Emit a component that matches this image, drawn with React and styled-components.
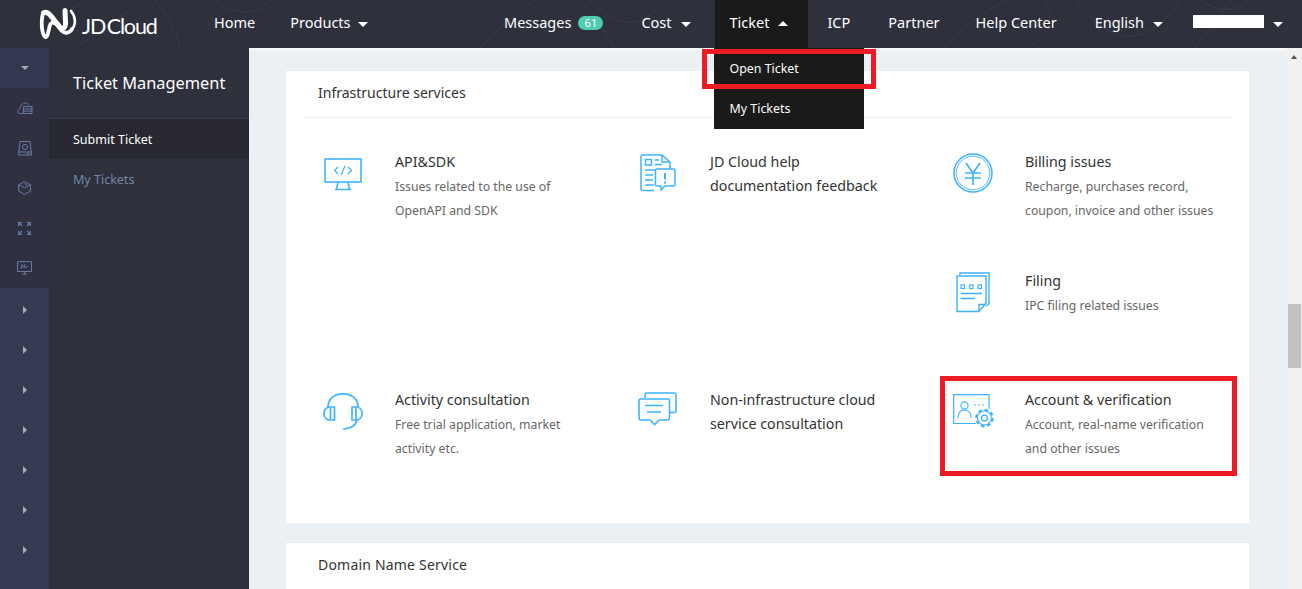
import React from "react";
import styled, { createGlobalStyle } from "styled-components";

const Global = createGlobalStyle`
  html, body { margin: 0; padding: 0; height: 100%; overflow: hidden; }
  body { font-family: "Noto Sans", "Open Sans", Arial, sans-serif; background: #fff; }
  #root { height: 100%; }
  * { box-sizing: border-box; }
`;

const Page = styled.div`
  width: 1302px; height: 589px; display: flex; flex-direction: column; overflow: hidden;
`;
const Header = styled.header`
  position: relative; height: 48px; flex: none; display: flex; align-items: stretch;
  background: #2e303c; color: #fff; overflow: visible;
`;
const HeaderLines = styled.svg`
  position: absolute; left: 0; top: 0; width: 1302px; height: 48px; pointer-events: none;
`;
const LogoLink = styled.a`
  position: relative; display: flex; align-items: center; width: 199px; padding-left: 39px; gap: 5px; flex: none;
`;
const LogoText = styled.span`
  font-family: Lato, sans-serif; font-weight: 400; font-size: 21.5px; letter-spacing: -1.1px; line-height: 48px; margin-top: 3px; white-space: nowrap;
  word-spacing: -3px;
`;
const Nav = styled.nav`
  position: relative; display: flex; align-items: stretch; width: ${p => p.$w}px; flex: none;
`;
const NavItem = styled.div`
  position: relative; display: flex; align-items: center; height: 48px; font-size: 14.5px; white-space: nowrap;
  margin-left: ${p => p.$ml || 0}px;
  padding: 0 ${p => p.$pr || 0}px 5px ${p => p.$pl || 0}px;
  background: ${p => (p.$active ? "#1a1a1a" : "transparent")};
`;
const Caret = styled.i`
  display: inline-block; width: 0; height: 0; margin-left: ${p => p.$gap || 9}px; margin-top: 6px;
  border-left: 5.5px solid transparent; border-right: 5.5px solid transparent;
  ${p => p.$up ? "border-bottom: 5px solid #fff; margin-top: 3px;" : "border-top: 5px solid #fff;"}
`;
const Badge = styled.span`
  display: inline-block; width: 25px; height: 14px; margin-left: 7px; margin-top: 3px; border-radius: 7px; background: #4fcdb0;
  color: #fff; font-size: 11px; line-height: 14px; text-align: center;
`;
const Masked = styled.span`
  display: block; width: 71px; height: 13px; background: #fff;
`;
const Dropdown = styled.div`
  position: absolute; top: 48px; left: -1px; width: 150px; height: 81px; background: #1a1a1a; z-index: 5; padding-top: 1px;
`;
const DropdownItem = styled.div`
  height: 40px; line-height: 40px; padding-left: 16px; font-size: 12.4px; color: #fff; white-space: nowrap;
`;
const HighlightBox = styled.div`
  position: absolute; border: 5px solid #ed1c24; z-index: 6; pointer-events: none;
  left: ${p => p.$l}px; top: ${p => p.$t}px; width: ${p => p.$w}px; height: ${p => p.$h}px;
`;
const Body = styled.div`
  flex: 1; display: flex; min-height: 0;
`;
const Rail = styled.aside`
  width: 49px; flex: none; display: flex; flex-direction: column; background: #363b54;
`;
const RailRow = styled.div`
  height: 40px; flex: none; display: flex; align-items: center; justify-content: center; color: #6a7aa8;
  background: ${p => p.$tone || "transparent"};
`;
const RailDown = styled.i`
  width: 0; height: 0; border-left: 4px solid transparent; border-right: 4px solid transparent; border-top: 4px solid #a7abb8;
`;
const RailRight = styled.i`
  width: 0; height: 0; margin-top: 4px; border-top: 4px solid transparent; border-bottom: 4px solid transparent; border-left: 4px solid #a7abb8;
`;
const SideMenu = styled.aside`
  width: 200px; flex: none; background: #2e303b;
`;
const SideTitle = styled.div`
  height: 71px; padding-left: 24px; line-height: 70px; font-size: 16.35px; color: #fff; border-bottom: 1px solid #3b3d49;
`;
const SideItem = styled.div`
  height: 40px; line-height: 42px; padding-left: 24px; font-size: 12.5px;
  color: ${p => (p.$active ? "#fff" : "#7685a8")};
  background: ${p => (p.$active ? "#282930" : "transparent")};
`;
const Main = styled.main`
  flex: 1; min-width: 0; background: #ebf0f4; border-top: 3px solid #f5f7f9; padding: 20px 37px 0; overflow: hidden;
`;
const Card = styled.section`
  background: #fff; margin-bottom: 20px; padding: 0 17px 0 18px;
  height: ${p => p.$h}px;
`;
const CardHead = styled.h2`
  margin: 0; height: 47px; padding-left: 14px; line-height: 43px; font-size: 14px; font-weight: 400; color: #333;
  letter-spacing: ${p => (p.$plain ? "0.2px" : "0")};
  border-bottom: ${p => (p.$plain ? "none" : "1px solid #eee")};
`;
const ServiceGrid = styled.div`
  display: grid; grid-template-columns: repeat(3, 315px); grid-auto-rows: 119px; padding-top: 32px;
`;
const Service = styled.div`
  display: flex; align-items: flex-start;
`;
const IconSlot = styled.div`
  width: 91px; flex: none; padding-left: ${p => p.$pl}px; padding-top: ${p => p.$pt}px; color: #3db3ff;
  svg { display: block; }
`;
const ServiceText = styled.div`
  width: 205px;
`;
const ServiceTitle = styled.div`
  font-size: 14.25px; line-height: 24px; color: #333;
`;
const ServiceDesc = styled.div`
  font-size: 12.25px; line-height: 24px; color: #666; margin-top: 1px;
`;
const Scrollbar = styled.div`
  position: relative; width: 16px; flex: none; background: #f1f1f1;
`;
const ScrollUp = styled.i`
  position: absolute; left: 5px; top: 7px; width: 0; height: 0;
  border-left: 3.5px solid transparent; border-right: 3.5px solid transparent; border-bottom: 4px solid #505050;
`;
const ScrollThumb = styled.div`
  position: absolute; left: 2px; right: 1px; top: 256px; height: 64px; background: #c1c1c1;
`;

const Logo = () => (
  <svg width="38" height="32" viewBox="0 0 38 32" fill="none" stroke="#fff" strokeLinecap="round" strokeLinejoin="round">
    <path d="M4.5 5 C9 2.5 12 8 16 13 L21 19 C24 22 27 20 26.5 14 L26 2.5" strokeWidth="5" />
    <path d="M3.5 7 C2 14 2.5 24 5.5 28.5 C8 31 9 26 10 21 C11 14 14 13 18 17 L23 23 C26 26 31 25 33 21" strokeWidth="3.8" />
    <path d="M32 3 C37 9 37 17 33 21" strokeWidth="2.6" />
  </svg>
);

const MonitorIcon = () => (
  <svg width="38" height="33" viewBox="0 0 38 33" fill="none" stroke="currentColor" strokeWidth="1.6">
    <rect x="1" y="1" width="36" height="23" />
    <path d="M11 31.5 H27 M14 24 L12.5 31.5 M24 24 L25.5 31.5" />
    <path d="M14 9 L10.5 12.5 L14 16 M24 9 L27.5 12.5 L24 16 M21 8 L17 17" strokeWidth="1.2" />
  </svg>
);
const DocIcon = () => (
  <svg width="36" height="38" viewBox="0 0 36 38" fill="none" stroke="currentColor" strokeWidth="1.5">
    <path d="M14 36.5 H2.5 Q1 36.5 1 35 V2.5 Q1 1 2.5 1 H22 L30 8 V14" />
    <path d="M22 1 V8 H30" />
    <rect x="5.5" y="5.5" width="6" height="5.5" />
    <path d="M14.5 6 H19 M14.5 10.5 H22 M5 16 H17 M5 21 H13 M5 26 H13 M5 31 H14" />
    <path d="M17 15 H34 Q35 15 35 16 V31 Q35 32 34 32 H25 L21 36 V32 H17 Q15.5 32 15.5 31 V16 Q15.5 15 17 15 Z" fill="#fff" />
    <path d="M25 19 V25.5 M25 27.5 V29.5" strokeWidth="2" />
  </svg>
);
const YenIcon = () => (
  <svg width="40" height="40" viewBox="0 0 40 40" fill="none" stroke="currentColor">
    <circle cx="20" cy="20" r="19" strokeWidth="1.5" />
    <circle cx="20" cy="20" r="16.8" strokeWidth="0.9" />
    <path d="M13 10 L20 20 L27 10 M12 20 H28 M12 25 H28 M20 20 V32" strokeWidth="1.7" />
  </svg>
);
const FilingIcon = () => (
  <svg width="34" height="41" viewBox="0 0 34 41" fill="none" stroke="currentColor" strokeWidth="1.4">
    <path d="M4 3 V1 H33 V32 L30 34" />
    <path d="M1 4 H30 V31 L23 39.5 H1 Z" fill="#fff" />
    <path d="M23 39.5 V32.5 H30" />
    <rect x="5" y="13" width="3.5" height="3.5" strokeWidth="1.2" />
    <rect x="13.5" y="13" width="3.5" height="3.5" strokeWidth="1.2" />
    <rect x="22" y="13" width="3.5" height="3.5" strokeWidth="1.2" />
    <path d="M4.5 21.5 H26 M4.5 26.5 H19" />
  </svg>
);
const HeadsetIcon = () => (
  <svg width="40" height="37" viewBox="0 0 40 37" fill="none" stroke="currentColor" strokeWidth="1.7">
    <path d="M5 14 C5 5 12 0.9 20 0.9 C28 0.9 35 5 35 14" />
    <path d="M11.5 14 H7 C3 14 0.9 17 0.9 20.5 C0.9 24 3 27 7 27 H11.5 Z" />
    <path d="M29 14 V27 H33 C37 27 39.1 24 39.1 20.5 C39.1 17 37 14 33 14 Z" />
    <path d="M7.5 14.5 V26.5 M33 14.5 V26.5" />
    <path d="M34 27 C33 32 28 36 20 36" />
  </svg>
);
const ChatIcon = () => (
  <svg width="39" height="34" viewBox="0 0 39 34" fill="none" stroke="currentColor" strokeWidth="1.6">
    <path d="M7 6 V2.5 Q7 1 8.5 1 H36.5 Q38 1 38 2.5 V19 Q38 20.5 36.5 20.5 H32" />
    <path d="M2.5 7 H29.5 Q31.5 7 31.5 9 V26 Q31.5 28 29.5 28 H21 L16.5 32.5 L12 28 H2.5 Q1 28 1 26 V9 Q1 7 2.5 7 Z" fill="#fff" />
    <path d="M7 13.5 H25 M9 20 H23" />
  </svg>
);
const AccountIcon = () => (
  <svg width="42" height="34" viewBox="0 0 42 34" fill="none" stroke="currentColor">
    <path d="M23 29.5 H.7 V.7 H36 V15" strokeWidth="1.2" />
    <circle cx="11.5" cy="11.5" r="3.6" strokeWidth="1.2" />
    <path d="M5 24 C5 19 7.5 16 11.5 16 C15.5 16 18 19 18 24" strokeWidth="1.2" />
    <path d="M21 11 H23 M25 11 H27 M29 11 H31" strokeWidth="1.2" />
    <circle cx="31.5" cy="24" r="8.2" strokeWidth="2.2" strokeDasharray="3.6 2.8" />
    <circle cx="31.5" cy="24" r="7" strokeWidth="1.1" fill="#fff" />
    <circle cx="31.5" cy="24" r="2.9" strokeWidth="1.3" />
  </svg>
);

const RailCloud = () => (
  <svg width="16" height="14" viewBox="0 0 16 14" fill="none" stroke="currentColor" strokeWidth="1"><path d="M6 12.5 H2.5 C1 12.5 .5 11 1 9.5 C1.5 8 2.5 7.5 3 7.5 C3.5 4 6 2 8 2 C10 2 11 3 12 4" /><path d="M6.5 5.5 H15 V12.5 H6.5 Z M6.5 8 H15 M6.5 10.2 H15" /></svg>
);
const RailDisk = () => (
  <svg width="14" height="15" viewBox="0 0 14 15" fill="none" stroke="currentColor" strokeWidth="1"><path d="M2 .5 H12 L13.5 14 H.5 Z" /><path d="M.5 11 H13.5" /><circle cx="7" cy="6" r="2.6" /><path d="M9 12.5 H11" /></svg>
);
const RailBox = () => (
  <svg width="13" height="14" viewBox="0 0 13 14" fill="none" stroke="currentColor" strokeWidth="1"><path d="M6.5 .7 L12.3 3.8 V10.2 L6.5 13.3 L.7 10.2 V3.8 Z" /><path d="M.7 3.8 L6.5 6.8 L12.3 3.8 M6.5 2.5 L9 4" /></svg>
);
const RailExpand = () => (
  <svg width="13" height="13" viewBox="0 0 13 13" fill="none" stroke="currentColor" strokeWidth="1.2"><path d="M.7 4 V.7 H4 M.7 .7 L4 4 M9 .7 H12.3 V4 M12.3 .7 L9 4 M.7 9 V12.3 H4 M.7 12.3 L4 9 M9 12.3 H12.3 V9 M12.3 12.3 L9 9" /></svg>
);
const RailScreen = () => (
  <svg width="15" height="14" viewBox="0 0 15 14" fill="none" stroke="currentColor" strokeWidth="1"><path d="M.5 .7 H14.5 V10.5 H.5 Z M5 13 H10 M7.5 10.5 V13" /><path d="M4 8 L5 3.5 L7 7 L8 3.5 M8 7 L11 5" /></svg>
);

const services = [
  { icon: <MonitorIcon />, pl: 20, pt: 8, title: ["API&SDK"], desc: ["Issues related to the use of", "OpenAPI and SDK"] },
  { icon: <DocIcon />, pl: 21, pt: 4, title: ["JD Cloud help", "documentation feedback"] },
  { icon: <YenIcon />, pl: 19, pt: 3, title: ["Billing issues"], desc: ["Recharge, purchases record,", "coupon, invoice and other issues"] },
  null,
  null,
  { icon: <FilingIcon />, pl: 22, pt: 3, title: ["Filing"], desc: ["IPC filing related issues"] },
  { icon: <HeadsetIcon />, pl: 19, pt: 5, title: ["Activity consultation"], desc: ["Free trial application, market", "activity etc."] },
  { icon: <ChatIcon />, pl: 19, pt: 4, title: ["Non-infrastructure cloud", "service consultation"] },
  { icon: <AccountIcon />, pl: 19, pt: 6, title: ["Account & verification"], desc: ["Account, real-name verification", "and other issues"] },
];

const lines = arr => arr.map((t, i) => <React.Fragment key={i}>{i > 0 && <br />}{t}</React.Fragment>);

export default function App() {
  return (
    <Page>
      <Global />
      <Header>
        <HeaderLines viewBox="0 0 1302 48" fill="none" stroke="#3a3c49" strokeWidth="1">
          <path d="M25 48 C50 25 70 10 85 0 M155 0 C170 20 178 35 180 48 M215 0 C225 10 250 18 265 5 L270 0 M75 48 L130 10" />
          <path d="M480 48 C500 25 520 12 535 0 M590 0 C620 30 640 30 665 0 M615 48 C600 25 590 10 580 0" />
          <path d="M943 48 C960 30 980 15 1005 0 M1045 0 C1060 20 1040 30 1020 25 C1000 22 1035 48 1044 48 M1077 0 C1110 48 1150 48 1180 0 M1200 0 C1215 12 1240 12 1250 0 M1195 48 L1232 0" />
        </HeaderLines>
        <LogoLink>
          <Logo />
          <LogoText>JD Cloud</LogoText>
        </LogoLink>
        <Nav $w={280}>
          <NavItem $ml={15}>Home</NavItem>
          <NavItem $ml={35}>Products<Caret $gap={7} /></NavItem>
        </Nav>
        <Nav $w={823}>
          <NavItem $ml={25}>Messages<Badge>61</Badge></NavItem>
          <NavItem $ml={38}>Cost<Caret /></NavItem>
          <NavItem $active $pl={15} $pr={20} $ml={24}>
            Ticket<Caret $up />
            <Dropdown>
              <DropdownItem>Open Ticket</DropdownItem>
              <DropdownItem>My Tickets</DropdownItem>
            </Dropdown>
          </NavItem>
          <NavItem $ml={19}>ICP</NavItem>
          <NavItem $ml={38}>Partner</NavItem>
          <NavItem $ml={36}>Help Center</NavItem>
          <NavItem $ml={38}>English<Caret /></NavItem>
          <NavItem $ml={30}><Masked /><Caret /></NavItem>
        </Nav>
      </Header>
      <HighlightBox $l={702} $t={49} $w={174} $h={40} />
      <HighlightBox $l={940} $t={376} $w={297} $h={100} />
      <Body>
        <Rail>
          <RailRow $tone="#333850"><RailDown /></RailRow>
          <RailRow $tone="#2f3140"><RailCloud /></RailRow>
          <RailRow $tone="#2f3140"><RailDisk /></RailRow>
          <RailRow $tone="#2f3140"><RailBox /></RailRow>
          <RailRow $tone="#2f3140"><RailExpand /></RailRow>
          <RailRow $tone="#2f3140"><RailScreen /></RailRow>
          {Array.from({ length: 7 }).map((_, i) => <RailRow key={i}><RailRight /></RailRow>)}
        </Rail>
        <SideMenu>
          <SideTitle>Ticket Management</SideTitle>
          <SideItem $active>Submit Ticket</SideItem>
          <SideItem>My Tickets</SideItem>
        </SideMenu>
        <Main>
          <Card $h={452}>
            <CardHead>Infrastructure services</CardHead>
            <ServiceGrid>
              {services.map((s, i) => s ? (
                <Service key={i}>
                  <IconSlot $pl={s.pl} $pt={s.pt}>{s.icon}</IconSlot>
                  <ServiceText>
                    <ServiceTitle>{lines(s.title)}</ServiceTitle>
                    {s.desc && <ServiceDesc>{lines(s.desc)}</ServiceDesc>}
                  </ServiceText>
                </Service>
              ) : <div key={i} />)}
            </ServiceGrid>
          </Card>
          <Card $h={60}>
            <CardHead $plain>Domain Name Service</CardHead>
          </Card>
        </Main>
        <Scrollbar>
          <ScrollUp />
          <ScrollThumb />
        </Scrollbar>
      </Body>
    </Page>
  );
}
